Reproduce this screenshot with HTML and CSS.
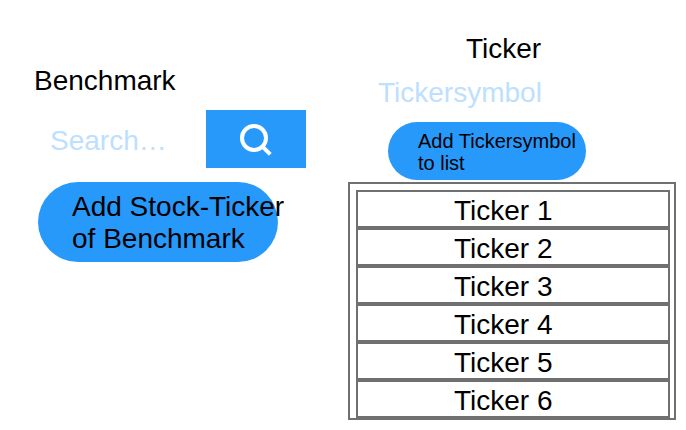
FILE: index.html
```html
<!DOCTYPE html>
<html lang="en">
<head>
<meta charset="utf-8">
<title>Benchmark</title>
<link rel="stylesheet" href="styles.css">
</head>
<body>
<main class="page">
  <section class="benchmark">
    <h2 class="title">Benchmark</h2>
    <div class="search">
      <span class="placeholder">Search…</span>
      <div class="search-button">
        <svg class="search-icon" viewBox="0 0 100 58" fill="none" stroke="#fff" stroke-width="4">
          <circle cx="48" cy="28" r="12"/>
          <path d="M56.3 36.3 L64.3 44.3"/>
        </svg>
      </div>
    </div>
    <div class="button button-large">Add Stock-Ticker<br>of Benchmark</div>
  </section>
  <section class="ticker">
    <h2 class="title ticker-title">Ticker</h2>
    <div class="placeholder symbol">Tickersymbol</div>
    <div class="button button-small">Add Tickersymbol<br>to list</div>
    <ul class="list">
      <li class="row">Ticker 1</li>
      <li class="row">Ticker 2</li>
      <li class="row">Ticker 3</li>
      <li class="row">Ticker 4</li>
      <li class="row">Ticker 5</li>
      <li class="row">Ticker 6</li>
    </ul>
  </section>
</main>
</body>
</html>
```
FILE: styles.css
```css
* { box-sizing: border-box; }
body {
  margin: 0;
  background: #fff;
  color: #000;
  font: 28px/32px "Liberation Sans", Arial, sans-serif;
}
.page {
  display: grid;
  grid-template-columns: 348px 328px;
  height: 430px;
  overflow: hidden;
}
.benchmark { padding: 65px 0 0 34px; }
.title { margin: 0; font-size: 28px; font-weight: 400; }
.placeholder { color: #bce0fd; }
.search {
  display: flex;
  align-items: center;
  justify-content: space-between;
  width: 272px;
  height: 58px;
  margin-top: 13px;
  padding-left: 16px;
}
.search .placeholder { padding-top: 4px; }
.search-button { width: 100px; height: 58px; background: #2699fb; }
.search-icon { display: block; width: 100px; height: 58px; }
.button { background: #2699fb; white-space: nowrap; }
.button-large {
  width: 240px;
  height: 80px;
  margin: 14px 0 0 4px;
  padding: 9px 0 0 34px;
  border-radius: 40px;
}
.ticker { padding-top: 33px; }
.ticker-title { padding-left: 118px; }
.symbol { margin-top: 12px; padding-left: 30px; }
.button-small {
  width: 198px;
  height: 58px;
  margin: 13px 0 0 40px;
  padding: 8px 0 0 30px;
  border-radius: 29px;
  font-size: 20px;
  line-height: 22px;
}
.list {
  height: 238px;
  margin: 2px 0 0;
  padding: 6px 4px 0 6px;
  border: 2px solid #707070;
  list-style: none;
}
.row {
  height: 38px;
  padding: 3px 0 0 96px;
  border: 2px solid #707070;
}
```
